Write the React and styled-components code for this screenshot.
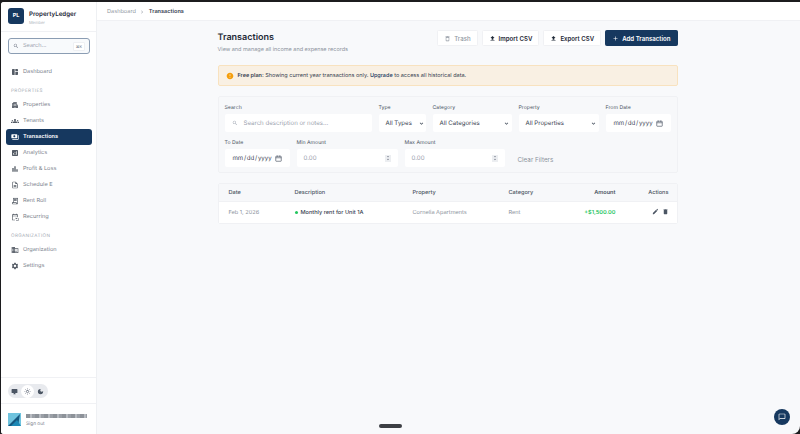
import React from "react";
import styled, { createGlobalStyle } from "styled-components";
import {
  MdSpaceDashboard, MdApartment, MdGroups, MdPayments, MdAnalytics, MdBarChart, MdOutlineDescription,
  MdOutlineReceiptLong, MdOutlineEventRepeat, MdBusiness, MdSettings, MdDesktopWindows, MdOutlineLightMode,
  MdDarkMode, MdSearch, MdChevronRight, MdDeleteOutline, MdFileUpload, MdAdd, MdEdit, MdDelete,
  MdChatBubbleOutline, MdError, MdUnfoldMore, MdExpandMore,
} from "react-icons/md";

const GlobalStyle = createGlobalStyle`
  html, body { margin: 0; height: 100%; background: #1c1c1e; }
  body { font-family: Inter, "Liberation Sans", sans-serif; overflow: hidden; text-rendering: geometricPrecision; }
  #root { height: 100%; }
  * { box-sizing: border-box; }
`;

const Frame = styled.div`
  height: 434px;
  padding: 2px 0 0 1px;
  display: flex;
`;

const Screen = styled.div`
  flex: 1;
  display: flex;
  min-width: 0;
  background: #f8f9fb;
  border-radius: 3px 0 8px 3px;
  overflow: hidden;
  position: relative;
`;

const Sidebar = styled.aside`
  width: 96px;
  flex: none;
  background: #fff;
  border-right: 1px solid #eef0f3;
  display: flex;
  flex-direction: column;
`;

const Brand = styled.div`
  height: 30px;
  padding: 6px 7px;
  display: flex;
  gap: 5px;
  border-bottom: 1px solid #f0f1f4;
`;

const Logo = styled.div`
  width: 16px;
  height: 16px;
  border-radius: 3px;
  background: #16385f;
  color: #fff;
  font-size: 5.5px;
  font-weight: 700;
  display: flex;
  align-items: center;
  justify-content: center;
`;

const BrandName = styled.div`
  font-size: 6.2px;
  font-weight: 600;
  color: #1f2937;
  line-height: 9px;
  margin-top: 2px;
`;

const BrandSub = styled.div`
  font-size: 4px;
  color: #aeb4bd;
  line-height: 7px;
`;

const SearchBox = styled.div`
  margin: 6px 6px 0 7px;
  height: 16px;
  border: 1px solid #8b9db3;
  border-radius: 3px;
  background: #f8fafc;
  padding: 0 4px;
  display: flex;
  align-items: center;
  gap: 4px;
  font-size: 5.6px;
  color: #9ca3af;
`;

const Kbd = styled.span`
  margin-left: auto;
  background: #fff;
  border: 1px solid #eef0f3;
  border-radius: 1px;
  font-size: 3.8px;
  padding: 1px 2px;
  color: #6b7280;
`;

const Nav = styled.nav`
  padding: 10px 4px 0 5px;
  display: flex;
  flex-direction: column;
`;

const NavItem = styled.div`
  height: 16px;
  border-radius: 3px;
  padding: 0 5px;
  display: flex;
  align-items: center;
  gap: 4px;
  font-size: 5.6px;
  font-weight: ${(p) => (p.$active ? 600 : 400)};
  color: ${(p) => (p.$active ? "#fff" : "#7b828d")};
  background: ${(p) => (p.$active ? "#16385f" : "transparent")};
  svg { color: ${(p) => (p.$active ? "#fff" : "#555c66")}; flex: none; }
`;

const NavLabel = styled.div`
  font-size: 4.6px;
  letter-spacing: 0.4px;
  color: #a3a9b2;
  padding: 9px 5px 2px;
  line-height: 6px;
`;

const SidebarFoot = styled.div`
  margin-top: auto;
`;

const ThemeRow = styled.div`
  border-top: 1px solid #f0f1f4;
  border-bottom: 1px solid #f0f1f4;
  padding: 6px 7px;
  height: 27px;
`;

const ThemeToggle = styled.div`
  width: 40px;
  height: 14px;
  border-radius: 7px;
  background: #e8eaee;
  display: flex;
  align-items: center;
`;

const ThemeOption = styled.div`
  width: 13px;
  height: 13px;
  border-radius: 50%;
  background: ${(p) => (p.$on ? "#fff" : "transparent")};
  color: ${(p) => (p.$on ? "#6b7280" : "#4b5563")};
  display: flex;
  align-items: center;
  justify-content: center;
`;

const UserRow = styled.div`
  height: 30px;
  padding: 9px 7px 0;
  display: flex;
  gap: 5px;
`;

const Avatar = styled.svg`
  width: 13px;
  height: 13px;
  flex: none;
`;

const HiddenEmail = styled.div`
  width: 61px;
  height: 4px;
  margin-top: 1px;
  background: repeating-linear-gradient(90deg, #8d9299 0 4px, #b7bbc1 4px 6px, #9a9fa6 6px 9px);
  filter: blur(0.7px);
`;

const SignOut = styled.div`
  font-size: 4.8px;
  color: #7b828d;
  margin-top: 3px;
`;

const Main = styled.main`
  flex: 1;
  min-width: 0;
  display: flex;
  flex-direction: column;
`;

const TopBar = styled.header`
  height: 19px;
  flex: none;
  background: #fff;
  border-bottom: 1px solid #f0f1f4;
  padding: 1px 10px 0;
  display: flex;
  align-items: center;
  gap: 3.5px;
  font-size: 5.6px;
  color: #9097a1;
`;

const Crumb = styled.span`
  color: #374151;
  font-weight: 600;
`;

const Content = styled.div`
  width: 460px;
  margin: 0 auto;
  padding-top: 9px;
  transform: translateX(-1px);
`;

const PageHead = styled.div`
  display: flex;
  justify-content: space-between;
  align-items: flex-start;
`;

const Title = styled.h1`
  margin: 2px 0 0;
  font-size: 9px;
  font-weight: 600;
  line-height: 12px;
  color: #1f2937;
`;

const Subtitle = styled.p`
  margin: 2px 0 0;
  font-size: 5.5px;
  line-height: 8px;
  color: #8b929c;
`;

const Actions = styled.div`
  display: flex;
  gap: 4px;
`;

const Btn = styled.button`
  height: 16px;
  padding: 0 6px;
  border: 1px solid ${(p) => (p.$primary ? "#16385f" : "#f0f1f4")};
  background: ${(p) => (p.$primary ? "#16385f" : "#fff")};
  color: ${(p) => (p.$primary ? "#fff" : p.$muted ? "#9097a1" : "#1f2937")};
  border-radius: 1.5px;
  font-family: inherit;
  font-size: 6.1px;
  font-weight: ${(p) => (p.$muted ? 500 : 600)};
  display: flex;
  align-items: center;
  gap: 3px;
  white-space: nowrap;
`;

const Banner = styled.div`
  margin-top: 11px;
  height: 21px;
  background: #f9f0e3;
  border: 1px solid #f8e2bf;
  border-radius: 2px;
  padding: 0 7px;
  display: flex;
  align-items: center;
  gap: 4px;
  font-size: 5.5px;
  color: #374151;
  svg { flex: none; }
  b { font-weight: 600; }
  a { color: #16385f; font-weight: 500; }
`;

const FilterCard = styled.section`
  margin-top: 10px;
  height: 77px;
  background: #f7f8fa;
  border: 1px solid #f0f1f4;
  border-radius: 2px;
  padding: 8px 6px 0;
  display: flex;
  flex-wrap: wrap;
  column-gap: 7px;
  row-gap: 8px;
  align-content: flex-start;
`;

const Field = styled.label`
  width: ${(p) => p.$w}px;
  display: block;
`;

const FieldLabel = styled.div`
  font-size: 5.2px;
  line-height: 6px;
  color: #4b5563;
  margin-bottom: 3px;
`;

const TextBox = styled.div`
  width: 100%;
  height: 18px;
  border-radius: 2px;
  background: #fff;
  padding: 0 7px;
  display: flex;
  align-items: center;
  gap: 6px;
  font-size: 6.1px;
  white-space: nowrap;
  color: ${(p) => (p.$value ? "#374151" : "#9ca3af")};
  justify-content: ${(p) => (p.$spread ? "space-between" : "flex-start")};
  svg { flex: none; }
`;

const SelectBox = styled(TextBox)`
  padding-right: 2px;
`;

const DateBox = styled(TextBox)`
  padding: 0 0 0 8px;
  gap: 3px;
`;

const DateText = styled.span`
  word-spacing: -1px;
`;

const Spin = styled.span`
  width: 6px;
  height: 7px;
  background: #eceef1;
  display: flex;
  align-items: center;
  justify-content: center;
  color: #6b7280;
`;

const ClearButton = styled.button`
  align-self: flex-end;
  height: 18px;
  margin-left: 5px;
  border: 0;
  background: none;
  padding: 4px 0 0 1px;
  font-family: inherit;
  font-size: 6.3px;
  color: #8b929c;
`;

const TableCard = styled.section`
  margin-top: 10px;
  background: #fff;
  border: 1px solid #f0f1f4;
  border-radius: 2px;
`;

const Row = styled.div`
  display: grid;
  grid-template-columns: 66px 118px 96px 60px 47px 1fr;
  align-items: center;
  padding: 0 8px 0 10px;
  height: ${(p) => (p.$head ? 18 : 21)}px;
  background: ${(p) => (p.$head ? "#f7f8fa" : "#fff")};
  border-bottom: ${(p) => (p.$head ? "1px solid #f0f1f4" : "0")};
  font-size: 5.6px;
  font-weight: ${(p) => (p.$head ? 500 : 400)};
  color: ${(p) => (p.$head ? "#4b5563" : "#8b929c")};
`;

const AmountCell = styled.div`
  text-align: right;
  font-weight: 600;
  color: ${(p) => p.$color || "inherit"};
`;

const ActionsCell = styled.div`
  display: flex;
  justify-content: flex-end;
  align-items: center;
  gap: 3px;
  color: #4b5563;
  svg { margin-top: -2px; }
`;

const DescCell = styled.div`
  display: flex;
  align-items: center;
  gap: 3px;
  color: #374151;
  font-weight: 500;
`;

const Dot = styled.span`
  width: 3px;
  height: 3px;
  border-radius: 50%;
  background: #22c55e;
`;

const ChatFab = styled.button`
  position: absolute;
  right: 10px;
  bottom: 9px;
  width: 16px;
  height: 16px;
  border: 0;
  padding: 0;
  border-radius: 50%;
  background: #16385f;
  color: #fff;
  display: flex;
  align-items: center;
  justify-content: center;
`;

const HomeBar = styled.div`
  position: absolute;
  left: 378px;
  bottom: 6px;
  width: 23px;
  height: 4px;
  border-radius: 2px;
  background: #3d3f44;
`;

const navTop = [
  ["Properties", MdApartment],
  ["Tenants", MdGroups],
  ["Transactions", MdPayments, true],
  ["Analytics", MdAnalytics],
  ["Profit & Loss", MdBarChart],
  ["Schedule E", MdOutlineDescription],
  ["Rent Roll", MdOutlineReceiptLong],
  ["Recurring", MdOutlineEventRepeat],
];

const Item = ({ label, icon: Icon, active }) => (
  <NavItem $active={active}>
    <Icon size={8} />
    {label}
  </NavItem>
);

const Stepper = () => (
  <Spin>
    <MdUnfoldMore size={6} />
  </Spin>
);

const CalendarIcon = () => (
  <svg width="7" height="7" viewBox="0 0 14 14" fill="none" stroke="#374151" strokeWidth="1.2">
    <rect x="1.5" y="2.5" width="11" height="10" rx="1" />
    <path d="M1.5 5.5h11M4.5 1v2.5M9.5 1v2.5" />
  </svg>
);

const DateField = ({ label }) => (
  <Field $w={65}>
    <FieldLabel>{label}</FieldLabel>
    <DateBox $value>
      <DateText>mm / dd / yyyy</DateText>
      <CalendarIcon />
    </DateBox>
  </Field>
);

const SelectField = ({ label, value, w }) => (
  <Field $w={w}>
    <FieldLabel>{label}</FieldLabel>
    <SelectBox $value $spread>
      {value}
      <MdExpandMore size={7} color="#374151" />
    </SelectBox>
  </Field>
);

const App = () => (
  <>
    <GlobalStyle />
    <Frame>
      <Screen>
        <Sidebar>
          <Brand>
            <Logo>PL</Logo>
            <div>
              <BrandName>PropertyLedger</BrandName>
              <BrandSub>Member</BrandSub>
            </div>
          </Brand>
          <SearchBox>
            <MdSearch size={6} color="#6b7280" />
            Search...
            <Kbd>⌘K</Kbd>
          </SearchBox>
          <Nav>
            <Item label="Dashboard" icon={MdSpaceDashboard} />
            <NavLabel>PROPERTIES</NavLabel>
            {navTop.map(([label, icon, active]) => (
              <Item key={label} label={label} icon={icon} active={active} />
            ))}
            <NavLabel>ORGANIZATION</NavLabel>
            <Item label="Organization" icon={MdBusiness} />
            <Item label="Settings" icon={MdSettings} />
          </Nav>
          <SidebarFoot>
            <ThemeRow>
              <ThemeToggle>
                <ThemeOption><MdDesktopWindows size={7} /></ThemeOption>
                <ThemeOption $on><MdOutlineLightMode size={7} /></ThemeOption>
                <ThemeOption><MdDarkMode size={7} /></ThemeOption>
              </ThemeToggle>
            </ThemeRow>
            <UserRow>
              <Avatar viewBox="0 0 13 13">
                <rect width="13" height="13" fill="#6fc3de" />
                <path d="M0 13 L12 1 L10 13 Z" fill="#16577f" />
                <path d="M3 13 L9 7 L13 13 Z" fill="#1d88b5" />
              </Avatar>
              <div>
                <HiddenEmail />
                <SignOut>Sign out</SignOut>
              </div>
            </UserRow>
          </SidebarFoot>
        </Sidebar>
        <Main>
          <TopBar>
            Dashboard
            <MdChevronRight size={6} />
            <Crumb>Transactions</Crumb>
          </TopBar>
          <Content>
            <PageHead>
              <div>
                <Title>Transactions</Title>
                <Subtitle>View and manage all income and expense records</Subtitle>
              </div>
              <Actions>
                <Btn $muted><MdDeleteOutline size={7} />Trash</Btn>
                <Btn><MdFileUpload size={7} />Import CSV</Btn>
                <Btn><MdFileUpload size={7} />Export CSV</Btn>
                <Btn $primary><MdAdd size={7} />Add Transaction</Btn>
              </Actions>
            </PageHead>
            <Banner>
              <MdError size={8} color="#f59e0b" />
              <span><b>Free plan:</b> Showing current year transactions only. <a>Upgrade</a> to access all historical data.</span>
            </Banner>
            <FilterCard>
              <Field $w={147}>
                <FieldLabel>Search</FieldLabel>
                <TextBox>
                  <MdSearch size={6} color="#9ca3af" />
                  Search description or notes...
                </TextBox>
              </Field>
              <SelectField label="Type" value="All Types" w={47} />
              <SelectField label="Category" value="All Categories" w={79} />
              <SelectField label="Property" value="All Properties" w={80} />
              <DateField label="From Date" />
              <DateField label="To Date" />
              <Field $w={101}>
                <FieldLabel>Min Amount</FieldLabel>
                <TextBox $spread>0.00<Stepper /></TextBox>
              </Field>
              <Field $w={100}>
                <FieldLabel>Max Amount</FieldLabel>
                <TextBox $spread>0.00<Stepper /></TextBox>
              </Field>
              <ClearButton>Clear Filters</ClearButton>
            </FilterCard>
            <TableCard>
              <Row $head>
                <div>Date</div>
                <div>Description</div>
                <div>Property</div>
                <div>Category</div>
                <AmountCell>Amount</AmountCell>
                <ActionsCell>Actions</ActionsCell>
              </Row>
              <Row>
                <div>Feb 1, 2026</div>
                <DescCell><Dot />Monthly rent for Unit 1A</DescCell>
                <div>Cornelia Apartments</div>
                <div>Rent</div>
                <AmountCell $color="#22c55e">+$1,500.00</AmountCell>
                <ActionsCell>
                  <MdEdit size={7} />
                  <MdDelete size={7} />
                </ActionsCell>
              </Row>
            </TableCard>
          </Content>
        </Main>
        <HomeBar />
        <ChatFab><MdChatBubbleOutline size={8} /></ChatFab>
      </Screen>
    </Frame>
  </>
);

export default App;
